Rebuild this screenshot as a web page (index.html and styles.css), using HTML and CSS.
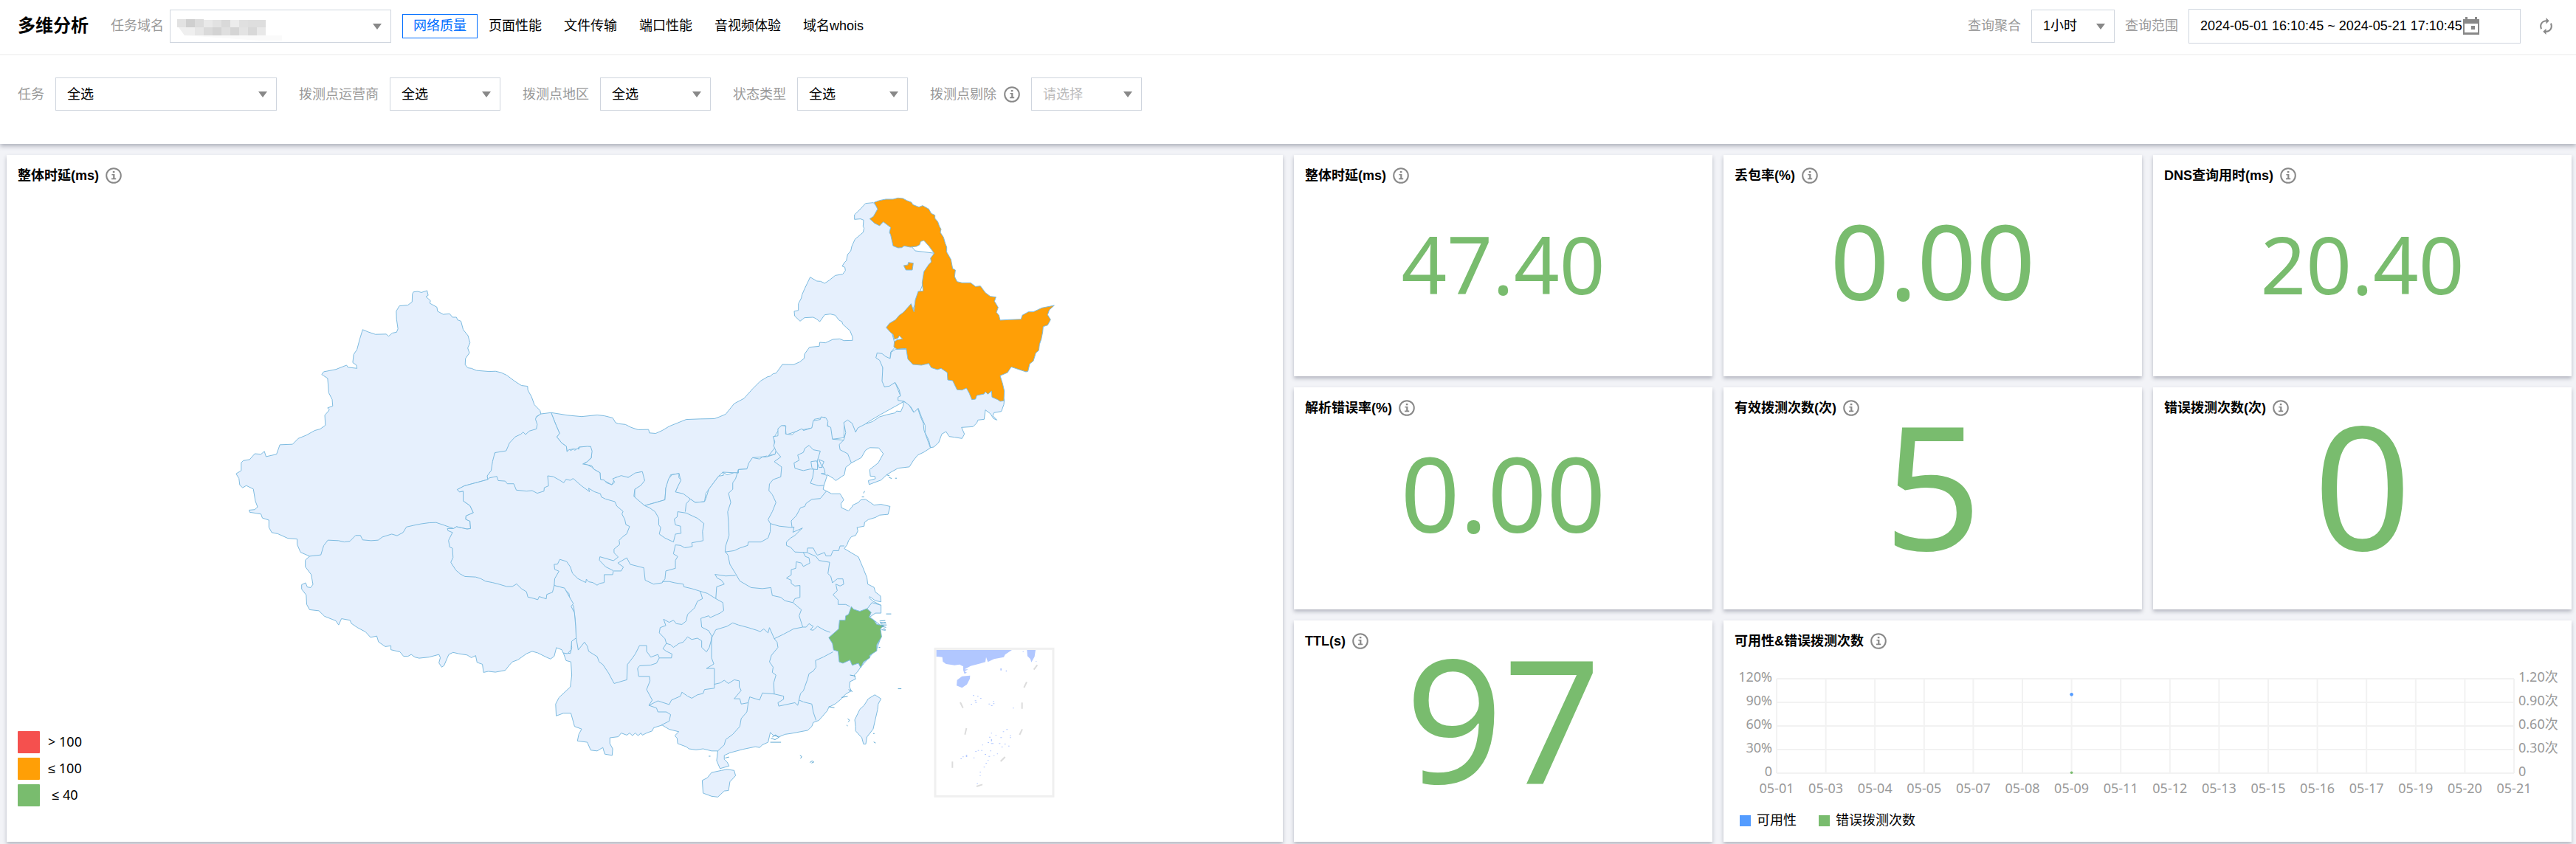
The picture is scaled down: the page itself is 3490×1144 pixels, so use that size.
FILE: index.html
```html
<!DOCTYPE html>
<html lang="zh-CN">
<head>
<meta charset="utf-8">
<meta name="viewport" content="width=device-width, initial-scale=1">
<title>多维分析</title>
<link rel="stylesheet" href="styles.css">
</head>
<body>
<svg class="sprite" aria-hidden="true">
  <symbol id="info" viewBox="0 0 22 22">
    <circle cx="11" cy="11" r="9.8" fill="none" stroke="#888" stroke-width="2"/>
    <path d="M9.8 5h2.6v2.2H9.8zM8.4 9h4v5.6h1.8v1.7H8v-1.7h2.2v-4H8.4z" fill="#888"/>
  </symbol>
</svg>
<header class="top">
  <div class="bar">
    <h1>多维分析</h1>
    <label class="lbl" for="domain">任务域名</label>
    <div class="select wide domain">
      <select id="domain"><option value=""></option></select>
      <svg class="masked" width="144" height="30" viewBox="0 0 144 30" aria-hidden="true">
        <path d="M10 22h110l22 0v7h-30z" fill="#fafafa"/>
        <path d="M0 0h12v11H0z" fill="#e2e2e2"/><path d="M12 0h12v11H12z" fill="#cfcfcf"/><path d="M24 0h12v11H24z" fill="#dcdcdc"/><path d="M36 1h12v10H36z" fill="#e9e9e9"/><path d="M48 1h12v10H48z" fill="#e2e2e2"/><path d="M60 1h12v10H60z" fill="#d9d9d9"/><path d="M72 1h12v10H72z" fill="#ececec"/><path d="M84 1h12v10H84z" fill="#e0e0e0"/><path d="M96 1h24v10H96z" fill="#dedede"/>
        <path d="M2 11h22v11H10z" fill="#efefef"/><path d="M24 11h12v11H24z" fill="#e6e6e6"/><path d="M36 11h12v11H36z" fill="#dadada"/><path d="M48 11h12v11H48z" fill="#d3d3d3"/><path d="M60 11h12v11H60z" fill="#dfdfdf"/><path d="M72 11h12v11H72z" fill="#d5d5d5"/><path d="M84 11h12v11H84z" fill="#e3e3e3"/><path d="M96 11h12v11H96z" fill="#d8d8d8"/><path d="M108 11h12v11h-12z" fill="#e8e8e8"/>
      </svg>
    </div>
    <nav class="tabs">
      <button class="on" type="button">网络质量</button>
      <button type="button">页面性能</button>
      <button type="button">文件传输</button>
      <button type="button">端口性能</button>
      <button type="button">音视频体验</button>
      <button type="button">域名whois</button>
    </nav>
    <div class="query">
      <label class="lbl" for="agg">查询聚合</label>
      <div class="select small"><select id="agg"><option>1小时</option></select></div>
      <label class="lbl" for="range">查询范围</label>
      <div class="date">
        <input id="range" type="text" value="2024-05-01 16:10:45 ~ 2024-05-21 17:10:45">
        <svg width="22" height="24" viewBox="0 0 22 24" aria-hidden="true"><path fill="#888" fill-rule="evenodd" d="M0 3h3V0h3v3h10V0h3v3h3v21H0zM2 9v12h18V9zM11 12h5v5h-5z"/></svg>
      </div>
      <button class="refresh" type="button" aria-label="刷新">
        <svg width="25" height="25" viewBox="0 0 24 24" aria-hidden="true"><path fill="#888" d="M12 6v3l4-4-4-4v3c-4.420 0-8 3.580-8 8 0 1.570.46 3.030 1.240 4.260L6.700 14.800A5.870 5.870 0 0 1 6 12c0-3.310 2.690-6 6-6zm6.760 1.740L17.300 9.200c.44.84.7 1.790.7 2.800 0 3.310-2.690 6-6 6v-3l-4 4 4 4v-3c4.420 0 8-3.580 8-8 0-1.570-.46-3.030-1.240-4.260z"/></svg>
      </button>
    </div>
  </div>
  <div class="filters">
    <div class="field"><label class="lbl" for="task">任务</label><div class="select wide"><select id="task"><option>全选</option></select></div></div>
    <div class="field"><label class="lbl" for="isp">拨测点运营商</label><div class="select"><select id="isp"><option>全选</option></select></div></div>
    <div class="field"><label class="lbl" for="area">拨测点地区</label><div class="select"><select id="area"><option>全选</option></select></div></div>
    <div class="field"><label class="lbl" for="state">状态类型</label><div class="select"><select id="state"><option>全选</option></select></div></div>
    <div class="field"><label class="lbl with-icon" for="skip">拨测点剔除 <svg class="info"><use href="#info"/></svg></label><div class="select empty"><select id="skip"><option>请选择</option></select></div></div>
  </div>
</header>

<main class="board">
  <section class="card map-card">
    <svg class="map" viewBox="9 210 1729 931" role="img" aria-label="中国地图">
      <!-- Inner Mongolia, west then east -->
      <g class="land" transform="translate(700 540) scale(.38266 .35714)">
        <path d="M805,0 770,20 740,60 718,70 700,77 650,78 600,80 570,93 540,106 515,122 492,133 470,131 467,118 430,119 405,110 385,99 360,96 350,92 340,74 310,66 285,63 230,69 180,64 122,54 138,98 152,133 142,146 160,170 176,182 178,202 190,194 204,192 215,194 220,185 262,183 265,225 250,240 238,250 265,255 275,270 295,282 297,308 315,315 337,328 350,300 395,300 440,278 453,312 418,345 418,378 453,407 525,385 528,340 545,290 575,285 580,310 562,355 615,382 632,395 665,392 670,360 715,295 730,280 785,283 785,270 815,268 835,225 870,222 915,212 918,200"/>
      </g>
      <g class="land" transform="translate(1040 240) scale(.33333)">
        <path d="M-96,900 -60,860 -30,830 0,812 10,810 22,800 35,797 60,762 105,763 130,752 148,738 150,720 170,692 210,688 212,672 235,674 265,660 293,658 310,665 345,664 345,650 335,625 305,598 302,588 290,582 275,562 255,557 232,560 212,588 197,576 185,570 150,572 132,586 110,565 108,546 125,542 125,515 137,492 140,478 150,455 173,407 200,423 215,424 232,432 250,420 275,400 305,395 316,380 314,367 303,362 312,348 320,340 325,315 338,300 342,282 355,253 388,225 392,208 388,200 390,175 378,170 353,172 353,153 375,132 398,107 430,104 600,300 680,310 590,540 500,612 520,690 500,712 498,738 468,775 475,853 518,835 540,890 550,915 460,965 410,995 357,1035 325,992 312,1000 310,1060 262,1066 250,1030 245,1010 233,977 190,985 183,1020 130,1030 75,1048 72,1010 55,1012 25,1060 30,1100 0,1138"/>
      </g>
      <!-- provinces south of Inner Mongolia, with their shared borders -->
      <g class="land" transform="translate(700 540) scale(.38266 .35714)">
        <path d="M132,710 -60,500 -150,300 -30,150 85,59 122,54 138,98 152,133 142,146 160,170 176,182 178,202 186,194 192,198 200,192 206,197 215,190 220,193 222,185 250,182 262,183 267,200 264,225 250,240 234,249 250,252 265,260 275,270 295,282 297,308 310,310 318,320 337,328 347,318 340,305 370,293 395,300 420,283 445,278 453,312 440,330 418,345 415,372 453,407 490,396 525,385 528,340 538,305 550,290 575,285 574,300 582,310 570,335 562,355 590,362 615,382 632,395 665,392 670,380 680,345 715,295 732,292 730,280 745,290 770,282 785,283 785,270 815,268 822,245 835,225 860,230 870,222 885,222 915,212 918,200 910,180 914,165 908,145 925,142 925,115 938,103 953,105 952,135 975,138 985,128 1010,115 1015,122 1045,112 1050,85 1075,80 1078,70 1095,74 1102,88 1100,105 1112,110 1118,155 1158,158 1165,130 1158,92 1172,82 1188,95 1200,128 1208,112 1235,97 1260,88 1285,70 1310,62 1340,55 1345,48 1360,50 1368,30 1370,12 1385,20 1392,30 1405,52 1420,38 1430,70 1440,95 1442,120 1465,188 1440,205 1420,215 1405,235 1390,260 1350,265 1325,280 1310,290 1290,310 1270,318 1248,327 1245,312 1270,305 1268,296 1252,295 1250,270 1280,245 1298,210 1282,188 1250,187 1235,197 1220,225 1185,245 1165,262 1160,290 1130,312 1120,303 1100,290 1088,330 1085,345 1115,362 1145,362 1158,385 1148,400 1150,415 1175,427 1187,412 1190,405 1210,395 1218,385 1235,383 1252,395 1265,405 1290,402 1322,410 1315,440 1285,443 1270,452 1245,460 1232,470 1230,485 1205,490 1208,503 1200,520 1185,525 1175,540 1170,555 1160,570 1210,602 1225,640 1240,680 1243,705 1265,717 1270,735 1288,750 1290,772 1270,768 1250,752 1248,757 1262,770 1290,785 1290,815 1270,815 1250,830 1285,858 1290,905 1275,950 1218,1020 1205,1040 1195,1050 1200,1065 1180,1075 1178,1095 1185,1110 1165,1122 1150,1140 1130,1158 1105,1172 1100,1185 1070,1222 1050,1230 1045,1245 1030,1260 990,1268 970,1272 950,1275 930,1284 910,1280 898,1268 890,1305 870,1315 860,1325 845,1322 800,1332 755,1345 735,1355 735,1370 745,1380 752,1395 720,1405 708,1375 712,1338 690,1338 660,1330 635,1334 610,1330 600,1322 570,1310 568,1290 560,1280 574,1265 540,1256 515,1240 485,1250 480,1262 460,1270 445,1278 440,1270 430,1280 420,1270 410,1280 400,1270 390,1278 370,1270 360,1284 330,1288 330,1310 340,1330 338,1355 312,1350 305,1325 285,1338 262,1335 250,1305 215,1300 220,1275 230,1255 205,1245 192,1195 165,1195 140,1205 138,1160 150,1135 190,1095 195,1050 192,1000 175,995 165,965"/>
        <g class="borders">
          <path d="M165,965 190,968 195,945 192,925 210,905 218,955 240,925 250,940 255,960 285,980 292,1000 305,1010 325,1042 345,1082 390,1068 392,1010 410,985 420,970 435,938 460,938 460,960 475,982 500,972 505,985M210,905 208,850 202,790 190,770 185,740 165,720 132,710"/>
          <path d="M345,655 370,655 378,640 358,625 390,605 402,630 450,643 455,690 485,705 515,700 525,685 528,655 562,645 562,615 570,600 555,590 562,556 580,558 595,567 622,562 620,548 660,540 658,505 663,475 640,455 600,435 570,430 568,450 558,458 562,480 580,485 582,512 562,515 555,545 525,530 505,515 510,490 503,480 503,455 490,430 470,415 453,407M597,430 600,400 615,382"/>
          <path d="M515,695 540,695 560,700 590,705 592,715 620,722 650,732 675,740 705,760 708,715 735,705 725,690 710,682 702,668 740,674 775,672M785,270 775,305 765,320 765,345 750,360 758,395 747,430 750,470 752,520 740,560 738,580 748,595 755,630 775,665"/>
          <path d="M737,583 770,578 790,568 818,558 820,545 865,545 890,530 898,505 898,475 890,460 905,430 918,395 905,365 893,350 895,325 908,308 935,298 938,260 912,240 935,222 918,200"/>
          <path d="M898,475 930,485 975,490 982,488 978,508 1012,492 985,520 970,530 955,545 955,558 970,565 985,583 1028,585 1030,568 1050,568 1058,585 1065,595 1090,585 1095,598 1112,598 1120,578 1140,578 1145,560 1160,560M975,490 972,465 990,445 1005,415 1020,410 1025,398 1045,383 1075,380 1098,350"/>
          <path d="M1015,585 1022,600 1035,605 1038,625 1015,638 1008,625 990,620 988,645 972,650 972,670 955,682 972,690 972,702 985,712 1003,710 1003,755 985,760 978,775 1008,802 1000,825 1013,868 980,875 945,895 912,912 895,870 890,890 875,875 862,885 850,880 820,870 785,860 765,852 745,865 705,878 692,905 680,882 655,868 652,835 680,825 685,832 720,815 733,805 730,775 705,760"/>
          <path d="M1028,585 1060,600 1070,615 1108,622 1102,665 1112,675 1118,700 1135,685 1155,685 1158,705 1145,712 1130,705 1135,730 1120,745 1138,765 1138,782 1165,782 1180,790M775,665 790,693 830,718 870,722 900,718 905,748 935,755 950,768 978,775"/>
          <path d="M650,732 658,760 640,770 630,795 605,820 600,845 585,858 565,855 555,842 540,850 520,838 528,862 508,870 505,890 525,912 530,930 545,935 555,945 575,930 590,925 605,905 620,915 640,910 655,920 655,945 672,962 682,945 692,905M530,930 518,950 530,960 550,970 548,985 505,985 495,1005 475,1012 435,1015 428,1025 432,1055 470,1055 472,1072 460,1105 480,1145 468,1165 500,1148 540,1162 548,1145 580,1130 585,1115 605,1130 620,1138 640,1125 660,1120 665,1105 700,1100 700,1025 672,1025 698,1008 690,985 690,905"/>
          <path d="M700,1085 720,1080 735,1070 750,1082 770,1068 788,1072 788,1095 795,1108 770,1140 790,1140 795,1160 820,1155 825,1133 860,1145 870,1118 912,1122 910,1080 918,1050 905,1040 908,1020 895,1000 902,975 925,945 922,925 912,912M468,1165 495,1175 500,1190 530,1190 545,1200 540,1225 512,1240M820,1155 815,1190 795,1215 790,1245 765,1275 740,1295 735,1315 712,1338M912,1122 945,1130 945,1142 925,1155 928,1168 985,1155 995,1165 1005,1120 1015,1110 1030,1065 1035,1045 1050,1035 1060,1020 1058,995 1085,982 1120,962M1000,1145 1015,1152 1045,1160 1050,1190 1060,1222M1013,868 1025,868 1035,855 1050,865 1040,878 1050,880 1065,865 1090,880 1110,888"/>
          <path d="M1035,178 1050,195 1075,200 1065,235 1065,270 1040,268 1015,274 1000,270 985,265 982,245 1000,235 995,215 1015,205 1020,190ZM1042,240 1062,237 1070,262 1082,262 1070,232 1088,240 1082,255 1090,270 1092,285 1078,285 1098,292M1042,240 1045,262 1052,270 1048,300 1040,322 1070,332 1088,330M1240,800 1258,775 1290,785M1158,158 1142,175 1145,195 1172,210 1185,245"/>
        </g>
        <path class="good" d="M1185,790 1192,800 1215,808 1240,798 1255,812 1248,830 1265,842 1275,858 1300,862 1288,875 1292,905 1275,935 1275,958 1250,975 1250,985 1228,1000 1218,1022 1210,1005 1188,1013 1180,993 1155,1005 1142,1000 1138,960 1122,955 1118,930 1105,908 1140,875 1143,842 1163,842 1165,825 1175,820Z"/>
        <path d="M745,1408 770,1412 775,1432 755,1455 750,1488 735,1490 712,1513 690,1510 660,1498 657,1450 675,1440 690,1420 725,1412ZM1268,1125 1290,1140 1280,1160 1278,1180 1262,1255 1240,1285 1236,1312 1228,1312 1222,1288 1200,1262 1200,1245 1197,1220 1215,1180 1230,1165 1245,1140Z"/>
        <path class="isle" d="M1285,845l20-2M1286,850l22,3M1288,855l18-5M1290,860l20,0M1290,865l18,4M1298,872l8,6M1292,878l14,2M1308,818h18M1350,1102h12M1172,1216l7,6-6,6M1168,1240l4,3M1262,1272h5M1264,1304l7,4M1003,1355l6,4-4,8M1038,1382l8-6 6,4-8,4M680,1358h6M1282,945h5M1310,290l10,4M1318,300l10,4M1340,303h6M1232,352l-4,8M1222,374h8M900,1290l15,5 15-10M898,1305h38M905,1285l12-8 10,10M738,1365l14-4M1180,1050l20,4M1175,1105l14,8M1150,1135l22,-4M1105,1170l20,4"/>
      </g>
      <g class="land" transform="translate(300 370) scale(.38266 .35714)">
        <!-- Tibet -->
        <path d="M312,1075 352,1050 400,940 600,930 790,900 822,970 1178,1180 1178,1186 1215,1196 1228,1222 1246,1255 1238,1265 1250,1290 1254,1340 1256,1385 1240,1398 1238,1430 1225,1445 1210,1442 1205,1430 1186,1422 1178,1455 1165,1465 1150,1458 1120,1442 1100,1436 1080,1445 1050,1468 1030,1476 1018,1490 1005,1508 970,1515 945,1512 928,1516 924,1485 905,1478 900,1452 885,1460 870,1450 840,1445 820,1440 805,1448 800,1460 788,1490 780,1496 770,1480 775,1460 770,1448 735,1458 700,1462 685,1458 672,1448 660,1455 645,1455 632,1438 600,1430 600,1415 580,1418 556,1400 550,1378 528,1383 510,1362 480,1345 460,1330 455,1318 425,1312 415,1336 405,1320 365,1303 345,1282 312,1278 302,1258 300,1222 284,1200 284,1183 298,1176 304,1192 316,1194 324,1182 318,1145 297,1115 297,1090Z"/>
        <!-- Xinjiang -->
        <path d="M680,72 695,70 708,74 728,67 732,85 724,90 740,105 738,115 763,130 765,145 785,157 808,155 818,168 832,168 836,178 848,183 856,215 873,238 880,265 872,285 878,303 864,325 863,348 872,360 885,362 903,370 948,374 970,373 990,378 1010,388 1040,412 1062,427 1084,430 1085,445 1098,470 1108,500 1128,522 1131,535 1115,545 1112,555 1118,575 1115,592 1090,600 1077,613 1068,604 1060,612 1040,622 1020,645 1008,675 968,682 960,715 955,750 941,770 943,784 905,795 860,808 835,822 843,831 856,828 856,865 880,883 892,910 866,922 865,935 880,942 882,970 870,972 832,963 822,970 790,958 760,947 735,948 708,952 680,958 655,964 643,985 622,997 603,991 570,1002 555,1014 530,1016 500,1013 492,996 475,996 455,1018 435,1021 415,1016 377,1014 362,1035 352,1070 312,1075 280,1060 268,1030 268,1010 235,1007 200,990 178,985 168,965 168,938 145,930 140,915 100,908 98,900 118,898 128,888 120,865 113,820 88,807 75,815 65,805 62,780 52,762 70,750 70,720 78,712 100,708 118,686 140,688 152,677 158,697 195,688 207,652 252,650 272,628 300,616 330,598 350,592 368,578 366,540 382,520 376,512 394,505 392,480 380,455 376,400 362,390 355,385 362,375 405,366 443,350 448,358 480,362 478,350 465,340 468,310 480,290 490,250 500,215 520,224 545,233 583,232 592,240 605,228 620,225 625,212 620,175 619,145 630,125 660,122 675,110 676,80Z"/>
        <!-- Qinghai -->
        <path d="M943,784 948,778 975,772 980,788 1005,790 1012,800 1035,800 1044,824 1080,828 1100,826 1118,836 1142,828 1143,815 1158,808 1155,770 1175,773 1195,785 1212,796 1220,783 1235,787 1245,780 1275,808 1303,830 1300,817 1320,830 1342,838 1345,850 1360,858 1393,868 1400,885 1422,905 1418,915 1428,935 1432,955 1445,962 1435,990 1422,1000 1408,1015 1410,1030 1390,1048 1390,1062 1405,1078 1388,1092 1340,1077 1338,1090 1360,1115 1388,1130 1385,1145 1355,1145 1355,1175 1340,1178 1330,1185 1315,1175 1300,1172 1292,1162 1290,1175 1262,1160 1243,1140 1235,1115 1222,1095 1198,1087 1190,1105 1178,1106 1180,1125 1195,1132 1180,1160 1178,1186 1172,1212 1152,1220 1150,1237 1125,1228 1120,1240 1105,1235 1085,1230 1080,1210 1062,1198 1045,1180 1030,1190 1010,1190 985,1182 960,1175 935,1170 918,1160 900,1154 862,1152 845,1142 830,1128 812,1098 820,1080 818,1045 808,1040 804,1015 818,985 802,978 800,970 822,970 832,963 870,972 882,970 880,942 865,935 866,922 892,910 880,883 856,865 856,828 843,831 835,822 860,808 905,795Z"/>
      </g>
      <g class="land" transform="translate(1040 240) scale(.33333)">
        <!-- Jilin -->
        <path d="M520,700 700,700 900,800 962,905 960,925 950,953 920,958 915,970 932,988 918,982 905,962 885,947 880,985 855,988 850,1000 835,1015 788,1018 800,1045 790,1063 760,1058 738,1055 725,1035 708,1045 695,1080 675,1098 662,1100 655,1070 640,1040 640,1010 625,975 612,940 595,957 580,932 555,912 530,908 530,895 540,890 535,865 518,835 495,850 475,853 465,830 468,775 455,745 440,735 445,715 465,718 480,730 498,738 502,712 520,700"/>
        <!-- Heilongjiang -->
        <path class="warn" d="M433,103 455,95 480,90 510,90 530,85 550,87 565,95 585,103 590,112 615,122 630,116 655,130 665,148 680,155 680,168 692,182 698,200 705,212 702,225 715,245 722,270 728,285 728,305 745,335 752,372 763,378 760,405 770,425 790,430 825,430 845,445 865,443 885,470 905,485 928,488 922,505 937,530 930,550 940,562 945,582 980,580 1030,578 1035,562 1060,548 1080,548 1115,532 1165,522 1145,540 1138,560 1150,580 1138,602 1120,608 1118,630 1112,660 1105,680 1102,705 1090,715 1080,748 1065,760 1058,790 1050,792 990,772 975,795 945,808 955,840 962,870 960,910 945,912 935,905 912,895 910,870 895,883 885,873 880,882 850,888 845,903 830,905 820,880 808,858 790,866 770,865 752,828 732,825 730,795 705,778 690,783 665,775 655,758 625,765 590,762 570,740 563,697 525,700 513,690 515,670 525,662 548,658 535,645 530,655 515,660 510,640 500,632 482,612 495,595 520,580 535,562 552,550 583,515 595,548 600,500 612,465 632,463 628,430 635,385 655,355 665,345 662,330 677,310 655,280 635,258 622,262 618,275 605,282 580,285 555,280 545,287 530,288 510,280 500,235 495,225 500,205 470,182 455,198 435,188 415,170 430,160 447,130ZM553,360 570,357 572,347 592,350 588,378 562,378Z"/>
      </g>
      <!-- South China Sea inset -->
      <g transform="translate(1000 660) scale(.33333)">
        <rect x="801" y="658" width="480" height="600" fill="#fff" stroke="#f0f0f0" stroke-width="9"/>
        <g fill="#b1c7ff">
          <path d="M806,663H1113L1085,682 1080,692 1040,700 1015,712 1008,692 1005,712 985,718 945,728 920,742 935,742 920,750 930,755 920,760 915,745 915,730 900,722 880,725 845,720 832,710 830,692 806,690ZM1174,663H1209L1205,690 1192,713 1188,700 1176,688ZM890,785 910,770 943,767 942,780 930,803 910,817 888,808Z"/>
          <path d="M1066,738h5v8h-5zM1088,746h4v5h-4zM1157,668h3v4h-3zM1210,708h3v3h-3zM954,847h6v3h-6zM972,850h5v3h-5zM984,858h5v3h-5zM962,868h6v3h-6zM964,875h6v3h-6zM946,882h5v3h-5zM1036,871h5v3h-5zM1018,881h6v3h-6zM1028,888h6v3h-6zM1036,880h6v3h-6zM1116,898h5v3h-5zM1090,985h6v3h-6zM1076,994h5v3h-5zM1028,1000h4v3h-4zM1020,1016h6v3h-6zM1046,1008h4v3h-4zM1066,1018h6v3h-6zM1104,1010h5v3h-5zM1104,1018h5v3h-5zM1028,1026h4v8h-4zM1014,1038h6v3h-6zM1028,1042h10v3h-10zM1060,1042h6v3h-6zM1082,1044h6v3h-6zM1098,1052h5v3h-5zM1070,1056h6v3h-6zM992,1048h4v3h-4zM974,1070h5v3h-5zM964,1074h5v3h-5zM988,1070h5v3h-5zM1024,1072h5v3h-5zM1052,1084h4v3h-4zM1002,1086h6v3h-6zM1018,1094h6v3h-6zM1038,1092h4v3h-4zM904,1104h5v3h-5zM912,1096h5v3h-5zM926,1090h5v8h-5zM956,1100h5v3h-5zM1014,1110h4v3h-4zM1006,1122h5v3h-5zM998,1138h5v3h-5zM982,1158h5v3h-5zM982,1172h4v3h-4zM970,1205h5v3h-5z"/>
        </g>
        <path d="M1216,724 1202,743M1173,793 1162,816M1154,877V902M1155,985 1144,1008M1085,1098 1067,1116M993,1210 969,1218M871,1117V1142M928,981 922,1007M903,876 914,899" fill="none" stroke="#dcdcdc" stroke-width="6"/>
      </g>
    </svg>
    <h2>整体时延(ms) <svg class="info"><use href="#info"/></svg></h2>
    <ul class="levels">
      <li><i class="sw bad"></i><span>&gt; 100</span></li>
      <li><i class="sw mid"></i><span>≤ 100</span></li>
      <li><i class="sw ok"></i><span>≤ 40</span></li>
    </ul>
  </section>
  <section class="card"><h2>整体时延(ms) <svg class="info"><use href="#info"/></svg></h2><p class="value s">47.40</p></section>
  <section class="card"><h2>丢包率(%) <svg class="info"><use href="#info"/></svg></h2><p class="value m">0.00</p></section>
  <section class="card"><h2>DNS查询用时(ms) <svg class="info"><use href="#info"/></svg></h2><p class="value s">20.40</p></section>
  <section class="card"><h2>解析错误率(%) <svg class="info"><use href="#info"/></svg></h2><p class="value m">0.00</p></section>
  <section class="card"><h2>有效拨测次数(次) <svg class="info"><use href="#info"/></svg></h2><p class="value l">5</p></section>
  <section class="card"><h2>错误拨测次数(次) <svg class="info"><use href="#info"/></svg></h2><p class="value l">0</p></section>
  <section class="card"><h2>TTL(s) <svg class="info"><use href="#info"/></svg></h2><p class="value l">97</p></section>
  <section class="card chart-card">
    <h2>可用性&amp;错误拨测次数 <svg class="info"><use href="#info"/></svg></h2>
    <div class="chart">
      <div class="y left"><span>120%</span><span>90%</span><span>60%</span><span>30%</span><span>0</span></div>
      <svg class="plot" role="img" aria-label="可用性与错误拨测次数">
        <g stroke="#f2f2f2" stroke-width="2">
          <line x1="0" x2="100%" y1="0" y2="0"/><line x1="0" x2="100%" y1="25%" y2="25%"/><line x1="0" x2="100%" y1="50%" y2="50%"/><line x1="0" x2="100%" y1="75%" y2="75%"/><line x1="0" x2="100%" y1="100%" y2="100%"/>
          <line x1="0" x2="0" y1="0" y2="100%"/><line x1="6.667%" x2="6.667%" y1="0" y2="100%"/><line x1="13.333%" x2="13.333%" y1="0" y2="100%"/><line x1="20%" x2="20%" y1="0" y2="100%"/><line x1="26.667%" x2="26.667%" y1="0" y2="100%"/><line x1="33.333%" x2="33.333%" y1="0" y2="100%"/><line x1="40%" x2="40%" y1="0" y2="100%"/><line x1="46.667%" x2="46.667%" y1="0" y2="100%"/><line x1="53.333%" x2="53.333%" y1="0" y2="100%"/><line x1="60%" x2="60%" y1="0" y2="100%"/><line x1="66.667%" x2="66.667%" y1="0" y2="100%"/><line x1="73.333%" x2="73.333%" y1="0" y2="100%"/><line x1="80%" x2="80%" y1="0" y2="100%"/><line x1="86.667%" x2="86.667%" y1="0" y2="100%"/><line x1="93.333%" x2="93.333%" y1="0" y2="100%"/><line x1="100%" x2="100%" y1="0" y2="100%"/>
        </g>
        <circle cx="40%" cy="16.667%" r="2.300" fill="#549cff"/>
        <circle cx="40%" cy="99.400%" r="1.800" fill="#79bc6e"/>
      </svg>
      <div class="y right"><span>1.20次</span><span>0.90次</span><span>0.60次</span><span>0.30次</span><span>0</span></div>
      <div class="x"><div class="ticks"><span>05-01</span><span>05-03</span><span>05-04</span><span>05-05</span><span>05-07</span><span>05-08</span><span>05-09</span><span>05-11</span><span>05-12</span><span>05-13</span><span>05-15</span><span>05-16</span><span>05-17</span><span>05-19</span><span>05-20</span><span>05-21</span></div></div>
    </div>
    <ul class="series"><li><i class="blue"></i>可用性</li><li><i class="green"></i>错误拨测次数</li></ul>
  </section>
</main>
</body>
</html>
```
FILE: styles.css
```css
* { box-sizing: border-box; }

body {
  margin: 0;
  min-height: 100vh;
  display: flex;
  flex-direction: column;
  background: #f2f3f7;
  color: #000;
  font: 18px/24px "Liberation Sans", "Noto Sans CJK SC", sans-serif;
}

h1, h2, p, ul { margin: 0; padding: 0; }
ul { list-style: none; }
svg { display: block; }
button, select, input { font: inherit; color: inherit; background: none; border: 0; margin: 0; padding: 0; }

.sprite { width: 0; height: 0; position: absolute; }
.info { width: 22px; height: 22px; flex: none; }

/* header */
.top {
  position: relative;
  background: #fff;
  box-shadow: 0 3px 6px rgba(54, 58, 80, .36);
}

.bar {
  display: flex;
  align-items: center;
  height: 75px;
  padding: 0 28px 3px 24px;
  border-bottom: 2px solid #f4f4f4;
}

h1 { font-size: 24px; line-height: 32px; margin-right: 30px; white-space: nowrap; }
.lbl { color: #999; white-space: nowrap; }
.lbl.with-icon { display: flex; align-items: center; gap: 10px; }
.bar > .lbl { margin-right: 8px; }

.select { position: relative; width: 150px; height: 45px; flex: none; }
.select.wide { width: 300px; }
.select.small { width: 113px; }
.select select {
  appearance: none;
  width: 100%;
  height: 100%;
  padding: 0 30px 0 15px;
  border: 1px solid #cfd5de;
  border-radius: 0;
}
.select.empty select { color: #bbb; }
.select::after {
  content: "";
  position: absolute;
  right: 13px;
  top: 19px;
  border: 6px solid transparent;
  border-top: 8px solid #888;
  border-bottom: 0;
  pointer-events: none;
}
.masked { position: absolute; left: 10px; top: 13px; pointer-events: none; }

.tabs { display: flex; margin-left: 15px; }
.tabs button {
  height: 33px;
  padding: 0 14px;
  border: 1px solid transparent;
  line-height: 24px;
  white-space: nowrap;
}
.tabs .on { border-color: #006eff; color: #006eff; }

.query { display: flex; align-items: center; gap: 14px; margin-left: auto; }
.date {
  display: flex;
  align-items: center;
  width: 450px;
  height: 47px;
  padding-left: 15px;
  border: 1px solid #cfd5de;
}
.date input { width: 356px; height: 100%; }
.refresh { margin-left: 8px; }

.filters { display: flex; gap: 30px; height: 120px; padding: 30px 24px 0; }
.field { display: flex; align-items: center; gap: 15px; height: 45px; }

/* cards */
.board {
  flex: 1;
  display: grid;
  grid-template-columns: 1729fr 567fr 567fr 567fr;
  grid-template-rows: repeat(3, minmax(300px, 1fr));
  gap: 15px;
  padding: 15px 6px 3px 9px;
}

.card {
  display: grid;
  min-width: 0;
  background: #fff;
  box-shadow: 0 3px 5px rgba(54, 58, 80, .32);
}
.card > * { grid-area: 1 / 1; }

h2 {
  align-self: start;
  display: flex;
  align-items: center;
  gap: 9px;
  padding: 16px 15px 0;
  font-size: 18px;
  line-height: 24px;
  font-weight: 700;
}

.value {
  align-self: center;
  text-align: center;
  color: #79bc6e;
  font-family: "Noto Sans", sans-serif;
  line-height: 1;
}
.value.s { font-size: 108px; padding-bottom: 4px; }
.value.m { font-size: 140px; padding-bottom: 14px; }
.value.l { font-size: 232px; padding-bottom: 38px; }

/* map */
.map-card { grid-row: span 3; }
.map { width: 100%; height: 100%; min-height: 0; }
.land path {
  fill: #e6f0fd;
  stroke: #7dbbe0;
  stroke-width: 1px;
  stroke-linejoin: round;
  vector-effect: non-scaling-stroke;
}
.land .borders path, .land .isle { fill: none; }
.land .isle { stroke: #5fa9d3; }
.land .good { fill: #79bc6e; }
.land .warn { fill: #ff9f06; }

.levels {
  align-self: end;
  justify-self: start;
  display: grid;
  gap: 6px;
  padding: 0 15px 48px;
  font: 18px/28px "Noto Sans", sans-serif;
}
.levels li { display: flex; gap: 8px; height: 30px; }
.levels span { width: 52px; text-align: center; }
.sw { width: 30px; height: 30px; border-radius: 1px; }
.bad { background: #f5504e; }
.mid { background: #ff9f06; }
.ok { background: #79bc6e; }

/* chart */
.chart-card { grid-column: span 2; }
.chart-card > .chart { align-self: start; }
.chart {
  display: grid;
  grid-template-columns: 66px 1fr 72px;
  column-gap: 6px;
  row-gap: 8px;
  margin: 79px 0 0;
  color: #999;
  font: 18px/24px "Noto Sans", "Noto Sans CJK SC", sans-serif;
}
.plot { width: 100%; height: 128px; overflow: visible; }
.y { display: flex; flex-direction: column; justify-content: space-between; height: 152px; margin: -15px 0 -9px; }
.y.left { text-align: right; }
.x { grid-column: 2; }
.ticks {
  display: grid;
  grid-template-columns: repeat(16, 1fr);
  margin: 0 calc(-100% / 30);
  text-align: center;
}
.series { align-self: end; display: flex; gap: 30px; padding: 0 22px 17px; }
.series li { display: flex; align-items: center; gap: 8px; }
.series i { width: 15px; height: 15px; }
.blue { background: #549cff; }
.green { background: #79bc6e; }
```
